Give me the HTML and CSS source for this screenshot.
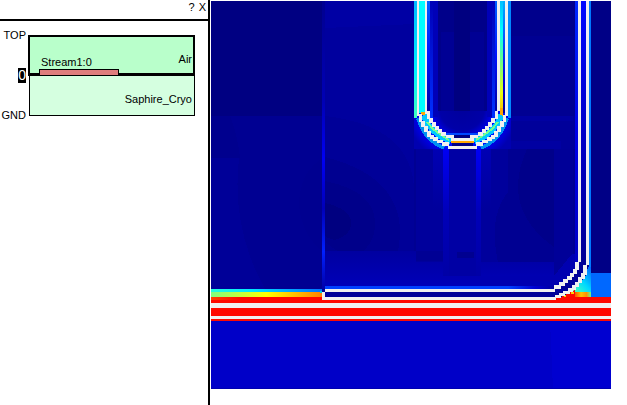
FILE: index.html
```html
<!DOCTYPE html>
<html lang="en">
<head>
<meta charset="utf-8">
<title>Current density</title>
<link rel="stylesheet" href="styles.css">
</head>
<body>
<main class="viewer">
  <aside class="panel">
    <header class="panel-bar">
      <button type="button" class="bar-button">?</button>
      <button type="button" class="bar-button">X</button>
    </header>
    <section class="stackup">
      <div class="levels">
        <span class="level">TOP</span>
        <button type="button" class="level level-current">0</button>
        <span class="level">GND</span>
      </div>
      <div class="layers">
        <div class="layer air">
          <span class="layer-name">Air</span>
          <div class="stream"><span class="stream-name">Stream1:0</span><div class="metal"></div></div>
        </div>
        <div class="layer substrate"><span class="layer-name">Saphire_Cryo</span></div>
      </div>
    </section>
  </aside>
  <section class="plot">
    <svg class="density" viewBox="211 1 400 388" role="img" aria-label="Current density" shape-rendering="crispEdges">
      <defs>
        <linearGradient id="feed"><stop offset="0" stop-color="#7fff80"/><stop offset=".5" stop-color="#ff0"/><stop offset="1" stop-color="#ff8000"/></linearGradient>
        <linearGradient id="feedEdge"><stop offset="0" stop-color="#20ffdf"/><stop offset=".35" stop-color="#00eaff"/><stop offset="1" stop-color="#0070ff"/></linearGradient>
        <linearGradient id="feedLow"><stop offset="0" stop-color="#ff4000"/><stop offset="1" stop-color="#ff0800"/></linearGradient>
        <linearGradient id="seam" x2="0" y2="1"><stop offset="0" stop-color="#000090"/><stop offset=".35" stop-color="#0000b4"/><stop offset=".55" stop-color="#0000f4"/><stop offset=".72" stop-color="#0000b8"/><stop offset=".87" stop-color="#0020ff"/><stop offset="1" stop-color="#0000a8"/></linearGradient>
        <linearGradient id="outerL" x2="0" y2="1"><stop offset="0" stop-color="#00b8ff"/><stop offset=".6" stop-color="#00f0ff"/><stop offset="1" stop-color="#40ffc0"/></linearGradient>
        <linearGradient id="hot" x2="0" y2="1"><stop offset="0" stop-color="#00c0ff"/><stop offset=".25" stop-color="#00ffff"/><stop offset=".5" stop-color="#60ff90"/><stop offset=".8" stop-color="#e8ff10"/><stop offset="1" stop-color="#ffb000"/></linearGradient>
        <linearGradient id="cool" x2="0" y2="1"><stop offset="0" stop-color="#00b0ff"/><stop offset=".35" stop-color="#0050ff"/><stop offset=".7" stop-color="#0000e0"/><stop offset="1" stop-color="#000098"/></linearGradient>
        <linearGradient id="fade" x2="0" y2="1"><stop offset="0" stop-color="#0060ff"/><stop offset=".5" stop-color="#0010ff"/><stop offset="1" stop-color="#0000a0"/></linearGradient>
        <linearGradient id="wall" x2="0" y2="1"><stop offset="0" stop-color="#0000b8"/><stop offset="1" stop-color="#0030ff"/></linearGradient>
        <linearGradient id="gap" x2="0" y2="1"><stop offset="0" stop-color="#0008ff"/><stop offset=".5" stop-color="#0000c8"/><stop offset="1" stop-color="#000094"/></linearGradient>
        <linearGradient id="right" x2="0" y2="1"><stop offset="0" stop-color="#0028ff"/><stop offset=".5" stop-color="#0000e8"/><stop offset="1" stop-color="#0000c4"/></linearGradient>
        <linearGradient id="stem" x2="0" y2="1"><stop offset="0" stop-color="#0000f4"/><stop offset=".5" stop-color="#0000b8"/><stop offset="1" stop-color="#0000a6"/></linearGradient>
        <linearGradient id="side" x2="0" y2="1"><stop offset="0" stop-color="#0000b4"/><stop offset="1" stop-color="#00009c"/></linearGradient>
        <linearGradient id="trace"><stop offset="0" stop-color="#0040ff"/><stop offset=".8" stop-color="#0040ff"/><stop offset=".92" stop-color="#0000d0"/><stop offset="1" stop-color="#0000a0"/></linearGradient>
        <linearGradient id="floor" x2="0" y2="1"><stop offset="0" stop-color="#0000a0"/><stop offset="1" stop-color="#0000b8"/></linearGradient>
        <linearGradient id="corner" x1="0" y1="1" x2="1" y2="0"><stop offset="0" stop-color="#fff000"/><stop offset=".3" stop-color="#40ffc0"/><stop offset=".6" stop-color="#00d8ff"/><stop offset="1" stop-color="#0060ff"/></linearGradient>
        <linearGradient id="spark"><stop offset="0" stop-color="#ff3000"/><stop offset=".45" stop-color="#ffc000"/><stop offset=".75" stop-color="#ff9000"/><stop offset="1" stop-color="#60ff90"/></linearGradient>
        <radialGradient id="halo" gradientUnits="userSpaceOnUse" cx="462" cy="108" r="56"><stop offset="0" stop-color="#00009c"/><stop offset=".4" stop-color="#0000a8"/><stop offset=".58" stop-color="#0000f0"/><stop offset=".74" stop-color="#0010ff"/><stop offset=".86" stop-color="#0000dc"/><stop offset="1" stop-color="#0000b0"/></radialGradient>
      </defs>

      <!-- field away from the conductors -->
      <path fill="#000092" d="M211 1h400v388H211z"/>
      <path fill="#000082" d="M211 1h111v115H211z"/>
      <path fill="#00008e" d="M211 116h19q8 20 10 42h-29z"/>
      <path fill="#000098" d="M211 158h28q-8 70 26 131h-54z"/>
      <path fill="#00009e" d="M325 1h89v285h-89z"/>
      <path fill="#0000a4" d="M325 1h89v23l-89 4z"/>
      <path fill="#000098" d="M325 116q88 10 89 75v60h-89z"/>
      <path fill="#000090" d="M325 157Q300 170 299 204q2 30 23 47h76q14-72-73-94z"/>
      <path fill="#00008a" d="M325 181q50 10 50 42 0 18-12 28h-25q-16-8-16-20z"/>
      <path fill="#000080" d="M325 203q26 6 26 20 0 12-16 17-10-2-10-6z"/>
      <path fill="url(#seam)" d="M322 1h3v288h-3z"/>

      <path fill="#00008c" d="M511 1h64v35h-64z"/>
      <path fill="#000092" d="M511 36h64v80h-64z"/>
      <path fill="#00009a" d="M511 116h64v33h-64z"/>
      <path fill="#0000a2" d="M511 116h62v5h-62zM511 141h50v8h-50z"/>
      <path fill="#00009c" d="M416 149h137v113H416z"/>
      <path fill="#000092" d="M508 149h46v113h-56q-10-45 10-70z"/>
      <path fill="#00008a" d="M527 149h27v98q-54-38-27-98z"/>
      <path fill="#000098" d="M554 149h19v120l-19 10z"/>
      <path fill="url(#floor)" d="M325 251h91v11h138v24H325z"/>
      <path fill="#000094" d="M416 251h29v10h-29z"/>
      <path fill="url(#side)" d="M433 149h10v60h-10zM481 149h10v60h-10z"/>
      <path fill="#0000b0" d="M480 276h74l18-22h3v32h-95z"/>
      <path fill="#0000a4" d="M449 149h27v127h-27z"/>
      <path fill="#000090" d="M457 252h17v6h-17z"/>
      <path fill="url(#stem)" d="M443 149h6v127h-6zM476 149h5v127h-5z"/>

      <!-- inside the loop -->
      <path fill="#000098" d="M430 1h67v115h-67z"/>
      <path fill="#00008a" d="M438 1h49v110h-49z"/>
      <path fill="#000094" d="M441 32h43v79h-43z"/>
      <path fill="#000080" d="M454 1h16v110h-16z"/>
      <path fill="url(#halo)" d="M414 111h97v38h-97z"/>
      <path fill="url(#wall)" d="M430 1h3v118h-3zM492 1h3v118h-3z"/>
      <path fill="#0000b8" d="M433 1h5v116h-5zM487 1h5v116h-5z"/>
      <path fill="url(#fade)" d="M427 1h3v110h-3zM495 1h2v110h-2z"/>

      <!-- loop conductor -->
      <path fill="url(#outerL)" d="M414 1h3v117h-3z"/>
      <path fill="#00ffff" d="M419 1h6v112h-6z"/>
      <path fill="url(#hot)" d="M500 1h3v115h-3z"/>
      <path fill="url(#cool)" d="M503 1h2v112h-2z"/>
      <path fill="#0088ff" d="M508 1h3v117h-3z"/>
      <path class="glow" d="M418 118l3 8 4 7 5 6 8 6 6 3M507 118l-3 8-4 7-5 6-8 6-6 3"/>
      <path class="rim" d="M446 134h33"/>
      <path class="channel" d="M424 115l3 8 6 7 7 6 11 5M501 115l-3 8-6 7-7 6-11 5"/>
      <path class="core" d="M427 122l6 7 8 6 8 5M498 122l-6 7-8 6-8 5"/>
      <path fill="#ffa800" d="M421 112h4v3h-4zM500 108h3v7h-3zM451 141h23v2h-23z"/>
      <path fill="#000084" d="M454 135h16v3h-16zM452 143h21v3h-21z"/>
      <path class="line" d="M417 1h2v115h-2zM425 1h2v110h-2zM497 1h3v110h-3zM505 1h3v115h-3z"/>
      <path class="line" d="M419 114h3v8h-3zM421 121h4v6h-4zM424 126h4v6h-4zM427 131h4v6h-4zM430 135h4v4h-4zM433 137h5v4h-5zM437 140h6v3h-6zM442 142h7v4h-7zM448 146h29v3h-29zM476 142h7v4h-7zM482 140h6v3h-6zM487 137h5v4h-5zM491 135h4v4h-4zM494 131h4v6h-4zM497 126h4v6h-4zM500 121h4v6h-4zM503 115h3v7h-3z"/>
      <path class="line" d="M425 111h5v3h-5zM427 113h3v6h-3zM429 118h4v5h-4zM432 122h4v5h-4zM435 126h4v4h-4zM438 129h4v4h-4zM441 132h5v4h-5zM446 135h8v3h-8zM451 138h23v3h-23zM470 135h8v3h-8zM478 132h5v4h-5zM482 129h4v4h-4zM485 126h4v4h-4zM488 122h4v5h-4zM491 118h4v5h-4zM495 111h3v8h-3z"/>

      <!-- feed line and ground strip -->
      <path fill="url(#feedEdge)" d="M211 289h111v3H211z"/>
      <path fill="url(#feed)" d="M211 292h111v5H211z"/>
      <path fill="#ff0800" d="M211 297h400v24H211z"/>
      <path fill="url(#feedLow)" d="M211 297h30v3h-30z"/>
      <path fill="url(#trace)" d="M325 286h229v3H325z"/>
      <path fill="#000098" d="M325 292h231v5H325z"/>

      <!-- right conductor -->
      <path fill="#000086" d="M591 1h20v272h-20z"/>
      <path fill="#0068ff" d="M591 273h20v24h-20z"/>
      <path fill="url(#right)" d="M575 1h3v261h-3z"/>
      <path fill="url(#gap)" d="M581 1h5v264h-5z"/>
      <path fill="#0078ff" d="M589 1h2v272h-2z"/>
      <path fill="url(#corner)" d="M591 267v30h-26l15-14 6-8 2-8z"/>
      <path fill="#000098" d="M579 262h7v8l-5 10-8 9-12 7h-7v-8l12-6 10-9z"/>
      <path fill="url(#spark)" d="M573 292h18v5h-18z"/>
      <path fill="#ff0800" d="M561 297l14-7v7h-14z"/>
      <path fill="#ffd000" d="M571 292h3v2h-3zM564 295h2v2h-2z"/>
      <path class="line" d="M578 1h3v261h-3zM575 262h4v8h-4zM573 269h4v5h-4zM570 273h4v4h-4zM567 276h5v4h-5zM563 279h5v4h-5zM559 282h6v4h-6zM554 285h7v4h-7zM325 289h230v3H325z"/>
      <path class="line" d="M586 1h3v264h-3zM583 265h4v10h-4zM581 273h4v6h-4zM578 277h4v6h-4zM575 282h4v5h-4zM572 285h4v5h-4zM568 288h5v4h-5zM563 291h7v3h-7zM559 293h6v3h-6zM555 295h6v3h-6zM322 297h234v3H322zM322 292h3v6h-3z"/>
      <path class="line" d="M211 303h400v5H211zM211 316h400v3H211z"/>
      <path fill="#00d0e0" d="M320 291h2v2h-2z"/>

      <!-- field under the strip -->
      <path fill="#0000c8" d="M211 321h400v68H211z"/>
      <path fill="#0000d0" d="M550 321h61v68h-58z"/>
      <path fill="#0000b0" d="M211 388h400v1H211z"/>
    </svg>
  </section>
</main>
</body>
</html>
```
FILE: styles.css
```css
* {
  box-sizing: border-box;
}

body {
  margin: 0;
  background: #fff;
  color: #000;
  font: 11px/12px "Liberation Sans", Arial, sans-serif;
}

button {
  padding: 0;
  border: 0;
  background: none;
  color: inherit;
  font: inherit;
}

.viewer {
  display: flex;
  min-height: 100vh;
}

.panel {
  flex: 0 0 210px;
  border-right: 2px solid #000;
}

.panel-bar {
  display: flex;
  justify-content: flex-end;
  gap: 4px;
  height: 21px;
  padding: 1px 2px 0 0;
  border-bottom: 2px solid #000;
}

.bar-button {
  height: 12px;
}

.stackup {
  display: flex;
  gap: 2px;
  padding: 8px 13px 0 0;
}

.levels {
  display: flex;
  flex: 0 0 26px;
  flex-direction: column;
  align-items: flex-end;
  justify-content: space-between;
  height: 92px;
}

.level-current {
  height: 15px;
  background: #000;
  color: #fff;
  font-size: 14px;
  line-height: 15px;
}

.layers {
  flex: 1;
  padding-top: 6px;
}

.layer {
  display: flex;
}

.air {
  flex-direction: row-reverse;
  align-items: flex-end;
  justify-content: space-between;
  height: 41px;
  border: 2px solid #000;
  border-bottom-width: 3px;
  background: #b9ffcb;
}

.air .layer-name {
  padding: 0 1px 8px 0;
}

.substrate {
  align-items: flex-start;
  justify-content: flex-end;
  height: 40px;
  margin-left: 1px;
  padding: 17px 2px 0 0;
  border: 1px solid #000;
  border-top: 0;
  background: #d5ffe0;
}

.stream {
  width: 80px;
  margin: 0 0 -3px 9px;
}

.stream-name {
  display: block;
  padding: 0 2px;
}

.metal {
  height: 7px;
  margin-top: 1px;
  border: 1px solid #000;
  background: #df7d7d;
}

.plot {
  flex: 1;
  min-width: 0;
  padding: 1px 16px 0 1px;
}

.density {
  display: block;
  width: 100%;
  height: auto;
}

.line {
  fill: #f0f0f0;
}

.glow,
.rim,
.channel,
.core {
  fill: none;
}

.glow {
  stroke: #0090f0;
  stroke-width: 4;
}

.rim {
  stroke: #0048ff;
  stroke-width: 2;
}

.channel {
  stroke: #00c8ff;
  stroke-width: 6;
}

.core {
  stroke: #70ff90;
  stroke-width: 2;
}
```
